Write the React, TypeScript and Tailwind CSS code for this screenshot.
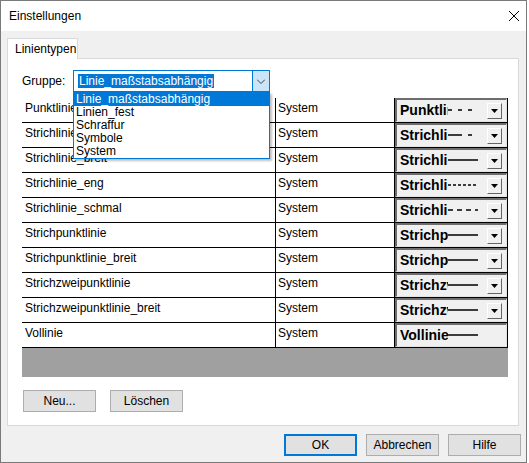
import React from 'react';

type Pattern = 'dot' | 'dashdot' | 'solid' | 'fine' | 'dash';

const rows: { name: string; pattern: Pattern; button: boolean }[] = [
  { name: 'Punktlinie', pattern: 'dot', button: true },
  { name: 'Strichlinie', pattern: 'dashdot', button: true },
  { name: 'Strichlinie_breit', pattern: 'solid', button: true },
  { name: 'Strichlinie_eng', pattern: 'fine', button: true },
  { name: 'Strichlinie_schmal', pattern: 'dash', button: true },
  { name: 'Strichpunktlinie', pattern: 'solid', button: true },
  { name: 'Strichpunktlinie_breit', pattern: 'solid', button: true },
  { name: 'Strichzweipunktlinie', pattern: 'solid', button: true },
  { name: 'Strichzweipunktlinie_breit', pattern: 'solid', button: true },
  { name: 'Vollinie', pattern: 'solid', button: false },
];

const dashes: Record<Pattern, string | undefined> = {
  dot: '4 6',
  dashdot: '14 6 4 6',
  solid: undefined,
  fine: '3 2',
  dash: '5 4',
};

const groups = ['Linie_maßstabsabhängig', 'Linien_fest', 'Schraffur', 'Symbole', 'System'];

function LineSample({ pattern }: { pattern: Pattern }) {
  return (
    <svg width="30" height="4" className="shrink-0">
      <line x1="0" y1="2" x2="30" y2="2" stroke="#000" strokeWidth="1.5" strokeDasharray={dashes[pattern]} />
    </svg>
  );
}

function StyleCell({ name, pattern, button }: { name: string; pattern: Pattern; button: boolean }) {
  return (
    <div className="h-full border-l-2 border-t-2 border-l-[#6d6d6d] border-t-[#6d6d6d] border-r border-b border-r-[#e3e3e3] border-b-[#e3e3e3] bg-[#f0f0f0] flex items-end pb-[2px] pl-[3px] pr-[4px]">
      <div className="flex items-center h-[18px]">
        <span className="w-[48px] overflow-hidden whitespace-nowrap font-['Liberation_Sans',Arial,sans-serif] font-bold text-[14px] leading-[18px] text-black">
          {name}
        </span>
        <LineSample pattern={pattern} />
      </div>
      {button && (
        <div className="ml-auto w-[15px] h-[16px] bg-[#f0f0f0] border-t border-l border-t-white border-l-white border-r border-b border-r-[#646464] border-b-[#646464] flex items-center justify-center">
          <svg width="7" height="4">
            <polygon points="0,0 7,0 3.5,4" fill="#000" />
          </svg>
        </div>
      )}
    </div>
  );
}

function WinButton({ label, def }: { label: string; def?: boolean }) {
  return (
    <button
      className={
        'w-[73px] h-[22px] bg-[#e1e1e1] text-[12px] text-black flex items-center justify-center ' +
        (def ? 'border-2 border-[#0078d7]' : 'border border-[#adadad]')
      }
    >
      {label}
    </button>
  );
}

export default function App() {
  return (
    <div className="w-[529px] h-[463px] bg-white font-['Liberation_Sans',Arial,sans-serif] text-[12px] text-black">
      <div className="w-[527px] h-[463px] border border-[#7a7a7a] flex flex-col">
        {/* Title bar */}
        <div className="h-[30px] bg-white flex items-center justify-between pl-[8px] pr-[7px] shrink-0">
          <span className="text-[12px]">Einstellungen</span>
          <svg width="10" height="10" className="mt-[-1px]">
            <line x1="0" y1="0" x2="10" y2="10" stroke="#000" strokeWidth="1" />
            <line x1="10" y1="0" x2="0" y2="10" stroke="#000" strokeWidth="1" />
          </svg>
        </div>

        {/* Body */}
        <div className="flex-1 bg-[#f0f0f0] pl-[6px] pr-[7px] pt-[7px] flex flex-col">
          <div className="w-[71px] h-[21px] bg-white border border-b-0 border-[#d9d9d9] flex items-center pl-[7px] relative z-10">
            Linientypen
          </div>
          <div className="h-[368px] bg-white border border-[#d9d9d9] -mt-px pl-[14px] flex flex-col">
            {/* Gruppe */}
            <div className="flex items-center mt-[11px] h-[22px]">
              <span className="w-[51px]">Gruppe:</span>
              <div className="relative w-[197px] h-[22px] border border-[#0078d7] bg-white flex items-center">
                <span className="ml-[4px] bg-[#0078d7] text-white leading-[14px] px-px">Linie_maßstabsabhängig</span>
                <div className="ml-auto h-full w-[17px] bg-[#cce4f7] border-l border-[#0078d7] flex items-center justify-center">
                  <svg width="8" height="5">
                    <polyline points="0,0.5 4,4.5 8,0.5" fill="none" stroke="#404040" strokeWidth="1" />
                  </svg>
                </div>
                {/* open list */}
                <div className="absolute left-[-1px] top-[21px] w-[197px] bg-white border border-[#0078d7] shadow-[2px_2px_2px_rgba(0,0,0,0.25)] z-20">
                  {groups.map((g, i) => (
                    <div
                      key={g}
                      className={'h-[13px] leading-[13px] pl-[2px] ' + (i === 0 ? 'bg-[#0078d7] text-white' : '')}
                    >
                      {g}
                    </div>
                  ))}
                </div>
              </div>
            </div>

            {/* Table */}
            <div className="mt-[6px] w-[486px] flex flex-col">
              {rows.map(r => (
                <div key={r.name} className="h-[25px] flex border-b border-black">
                  <div className="w-[254px] border-r border-black pl-[3px] pt-[1px]">{r.name}</div>
                  <div className="w-[119px] border-r border-black pl-[2px] pt-[1px]">System</div>
                  <div className="w-[113px] border-r border-black">
                    <StyleCell name={r.name} pattern={r.pattern} button={r.button} />
                  </div>
                </div>
              ))}
              <div className="h-[29px] bg-[#a0a0a0]" />
            </div>

            <div className="flex gap-[14px] mt-[13px] pl-px">
              <WinButton label="Neu..." />
              <WinButton label="Löschen" />
            </div>
          </div>

          {/* Dialog buttons */}
          <div className="flex justify-end gap-[9px] mt-[8px] mr-[-2px]">
            <WinButton label="OK" def />
            <WinButton label="Abbrechen" />
            <WinButton label="Hilfe" />
          </div>
        </div>
      </div>
    </div>
  );
}
